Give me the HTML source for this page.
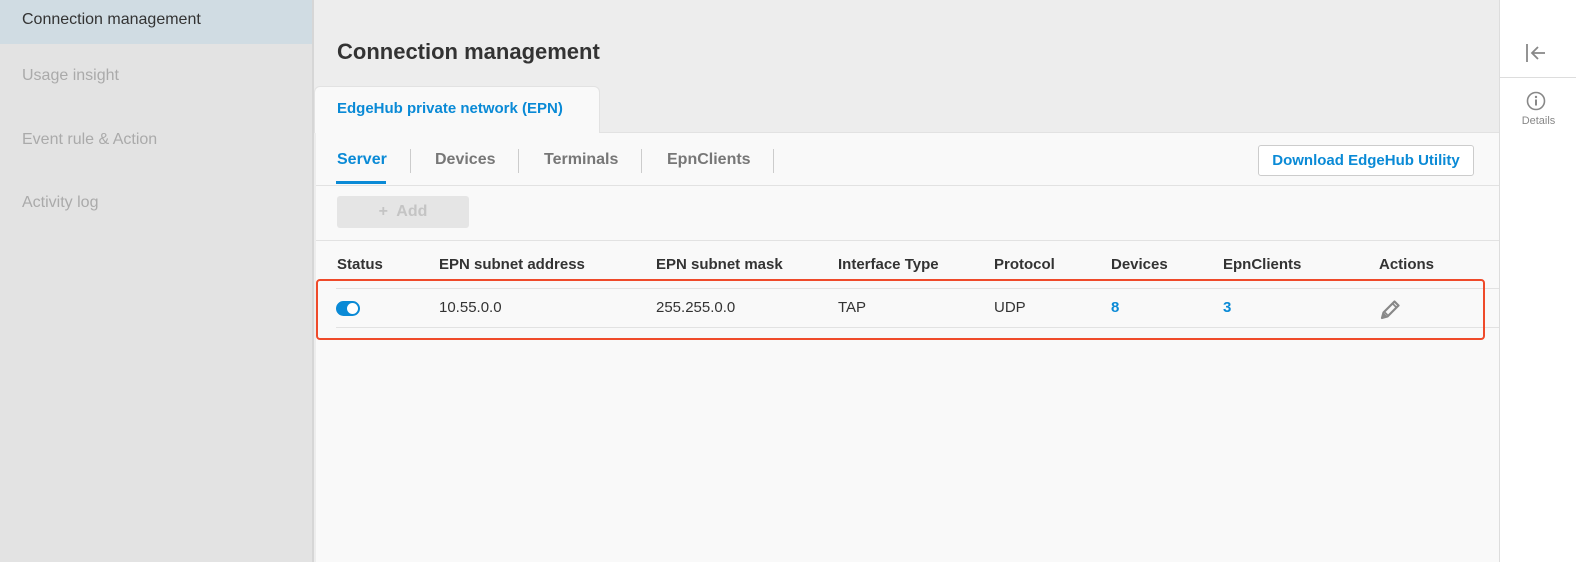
<!DOCTYPE html>
<html><head><style>
*{margin:0;padding:0;box-sizing:border-box}
body{width:1576px;height:562px;overflow:hidden;font-family:"Liberation Sans",Arial,sans-serif;background:#ededed;position:relative}
.abs{position:absolute}
.side{left:0;top:0;width:314px;height:562px;background:#e3e3e3;border-right:2px solid #d6d6d6}
.side div{position:absolute;left:22px;font-size:16px;color:#aaa}
.panel{left:316px;top:132px;width:1183px;height:430px;background:#f9f9f9}
.right{left:1499px;top:0;width:77px;height:562px;background:#fff;border-left:1px solid #ddd}
.th{top:256px;font-size:15px;font-weight:bold;color:#333}
.td{top:299px;font-size:15px;color:#333}
.lk{color:#0a8ad6;font-weight:bold}
</style></head><body>
<div class="abs side">
<div style="left:0;top:0;width:312px;height:44px;background:#d0dce3"></div>
<div style="top:11px;color:#333">Connection management</div>
<div style="top:67px">Usage insight</div>
<div style="top:131px">Event rule &amp; Action</div>
<div style="top:194px">Activity log</div>
</div>
<div class="abs" style="left:337px;top:39px;font-size:22px;font-weight:bold;color:#333">Connection management</div>
<div class="abs panel"></div>
<div class="abs" style="left:314px;top:86px;width:286px;height:47px;background:#f9f9f9;border:1px solid #e2e2e2;border-bottom:none;border-radius:6px 6px 0 0"></div>
<div class="abs" style="left:337px;top:100px;font-size:15px;font-weight:bold;color:#0a8ad6">EdgeHub private network (EPN)</div>
<div class="abs" style="left:600px;top:132px;width:899px;height:1px;background:#e2e2e2"></div>
<div class="abs" style="left:337px;top:151px;font-size:16px;font-weight:bold;color:#0a8ad6">Server</div>
<div class="abs" style="left:336px;top:181px;width:50px;height:3px;background:#0a8ad6"></div>
<div class="abs" style="left:410px;top:149px;width:1px;height:24px;background:#ccc"></div>
<div class="abs" style="left:435px;top:151px;font-size:16px;font-weight:bold;color:#777">Devices</div>
<div class="abs" style="left:518px;top:149px;width:1px;height:24px;background:#ccc"></div>
<div class="abs" style="left:544px;top:151px;font-size:16px;font-weight:bold;color:#777">Terminals</div>
<div class="abs" style="left:641px;top:149px;width:1px;height:24px;background:#ccc"></div>
<div class="abs" style="left:667px;top:151px;font-size:16px;font-weight:bold;color:#777">EpnClients</div>
<div class="abs" style="left:773px;top:149px;width:1px;height:24px;background:#ccc"></div>
<div class="abs" style="left:1258px;top:145px;width:216px;height:31px;background:#fff;border:1px solid #ccc;border-radius:3px;font-size:15px;font-weight:bold;color:#0a8ad6;text-align:center;line-height:29px">Download EdgeHub Utility</div>
<div class="abs" style="left:316px;top:185px;width:1183px;height:1px;background:#e2e2e2"></div>
<div class="abs" style="left:337px;top:196px;width:132px;height:32px;background:#e5e5e5;border-radius:3px;color:#c4c4c4;font-size:16px;font-weight:bold;text-align:center;line-height:32px">+&nbsp; Add</div>
<div class="abs" style="left:316px;top:240px;width:1183px;height:1px;background:#e2e2e2"></div>
<div class="abs th" style="left:337px">Status</div>
<div class="abs th" style="left:439px">EPN subnet address</div>
<div class="abs th" style="left:656px">EPN subnet mask</div>
<div class="abs th" style="left:838px">Interface Type</div>
<div class="abs th" style="left:994px">Protocol</div>
<div class="abs th" style="left:1111px">Devices</div>
<div class="abs th" style="left:1223px">EpnClients</div>
<div class="abs th" style="left:1379px">Actions</div>
<div class="abs" style="left:336px;top:288px;width:1163px;height:1px;background:#e2e2e2"></div>
<div class="abs" style="left:336px;top:327px;width:1163px;height:1px;background:#e2e2e2"></div>
<div class="abs" style="left:336px;top:301px;width:24px;height:15px;border-radius:8px;background:#0a8ad6"></div>
<div class="abs" style="left:347px;top:303px;width:11px;height:11px;border-radius:50%;background:#fff"></div>
<div class="abs td" style="left:439px">10.55.0.0</div>
<div class="abs td" style="left:656px">255.255.0.0</div>
<div class="abs td" style="left:838px">TAP</div>
<div class="abs td" style="left:994px">UDP</div>
<div class="abs td lk" style="left:1111px">8</div>
<div class="abs td lk" style="left:1223px">3</div>
<svg class="abs" style="left:1380px;top:298px" width="22" height="22" viewBox="0 0 22 22"><path d="M2 20l1.5-5.5L14.5 3.5l4 4L7.5 18.5z" fill="none" stroke="#888" stroke-width="2.2" stroke-linejoin="round"/><path d="M12.5 5.5l4 4M5 14.5l2.5 2.5" stroke="#888" stroke-width="1.6"/><path d="M2 20l1.5-5.5 4 4z" fill="#888"/></svg>
<div class="abs" style="left:316px;top:279px;width:1169px;height:61px;border:2px solid #ef4a2a;border-radius:4px"></div>
<div class="abs right">
<svg class="abs" style="left:24px;top:42px" width="24" height="22" viewBox="0 0 24 22"><g fill="none" stroke="#888" stroke-width="1.8"><path d="M3 2v18M21 11H8M14 5l-6 6 6 6"/></g></svg>
<div class="abs" style="left:0;top:77px;width:77px;height:1px;background:#ddd"></div>
<svg class="abs" style="left:26px;top:91px" width="20" height="20" viewBox="0 0 20 20"><circle cx="10" cy="10" r="8.5" fill="none" stroke="#888" stroke-width="1.6"/><rect x="9" y="8.5" width="2" height="6" fill="#888"/><circle cx="10" cy="6" r="1.2" fill="#888"/></svg>
<div class="abs" style="left:0;top:115px;width:77px;text-align:center;font-size:11px;color:#888">Details</div>
</div>
</body></html>
